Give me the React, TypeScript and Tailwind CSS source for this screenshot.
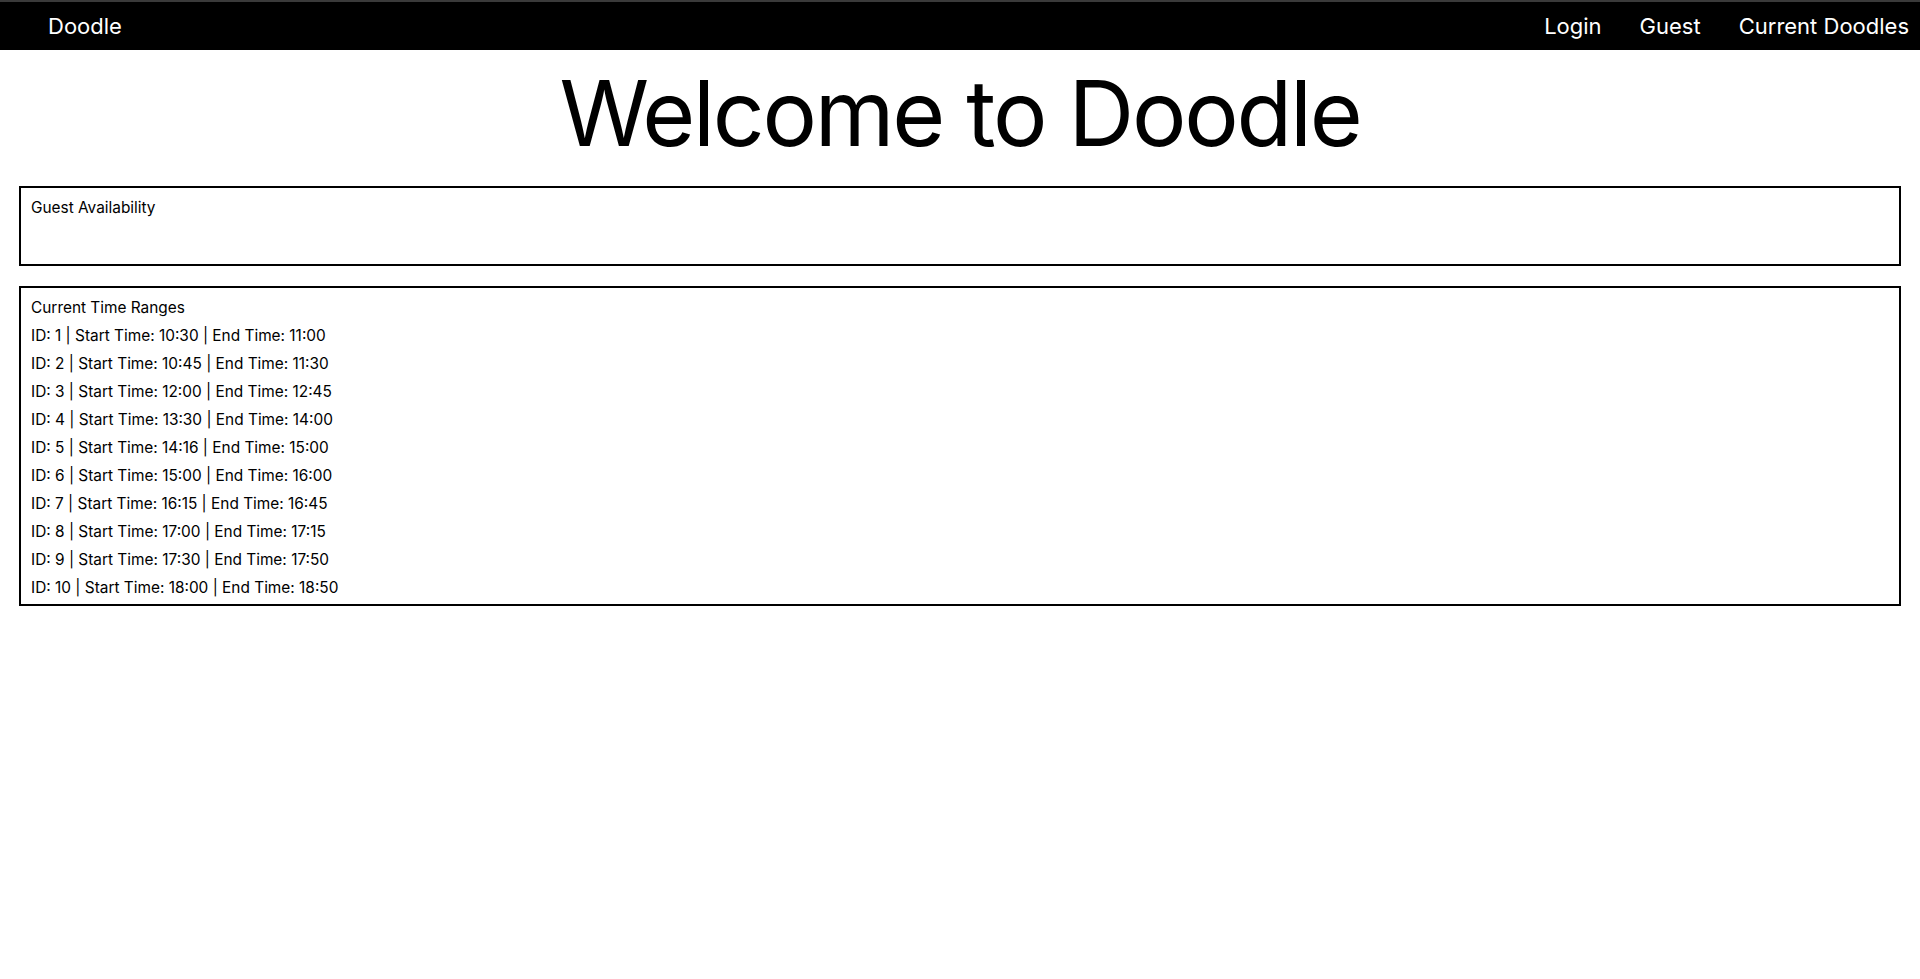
import React from 'react';

const ranges = [
  { id: 1, start: '10:30', end: '11:00' },
  { id: 2, start: '10:45', end: '11:30' },
  { id: 3, start: '12:00', end: '12:45' },
  { id: 4, start: '13:30', end: '14:00' },
  { id: 5, start: '14:16', end: '15:00' },
  { id: 6, start: '15:00', end: '16:00' },
  { id: 7, start: '16:15', end: '16:45' },
  { id: 8, start: '17:00', end: '17:15' },
  { id: 9, start: '17:30', end: '17:50' },
  { id: 10, start: '18:00', end: '18:50' },
];

const App = () => {
  return (
    <div className="min-h-screen bg-white text-black font-['Inter',sans-serif]">
      {/* Nav bar */}
      <nav className="h-[50px] bg-black border-t-2 border-[#3a3a3a] flex items-center justify-between pl-[48px] pr-[11px] text-white text-[22px]">
        <span>Doodle</span>
        <div className="flex items-center gap-[38px]">
          <a href="#">Login</a>
          <a href="#">Guest</a>
          <a href="#">Current Doodles</a>
        </div>
      </nav>

      <h1 className="text-center text-[91px] leading-none pt-[18px] pb-[27px] tracking-tight">
        Welcome to Doodle
      </h1>

      <div className="px-[19px] flex flex-col gap-[20px]">
        {/* Guest availability */}
        <div className="border-2 border-black pt-[6px] px-[10px] text-[15.4px]">
          <p className="leading-[28px]">Guest Availability</p>
          <div className="h-[42px]" />
        </div>

        {/* Time ranges */}
        <div className="border-2 border-black pt-[6px] pb-[2px] px-[10px] text-[15.4px]">
          <p className="leading-[28px]">Current Time Ranges</p>
          {ranges.map((r) => (
            <p key={r.id} className="leading-[28px]">
              ID: {r.id} | Start Time: {r.start} | End Time: {r.end}
            </p>
          ))}
        </div>
      </div>
    </div>
  );
};

export default App;
